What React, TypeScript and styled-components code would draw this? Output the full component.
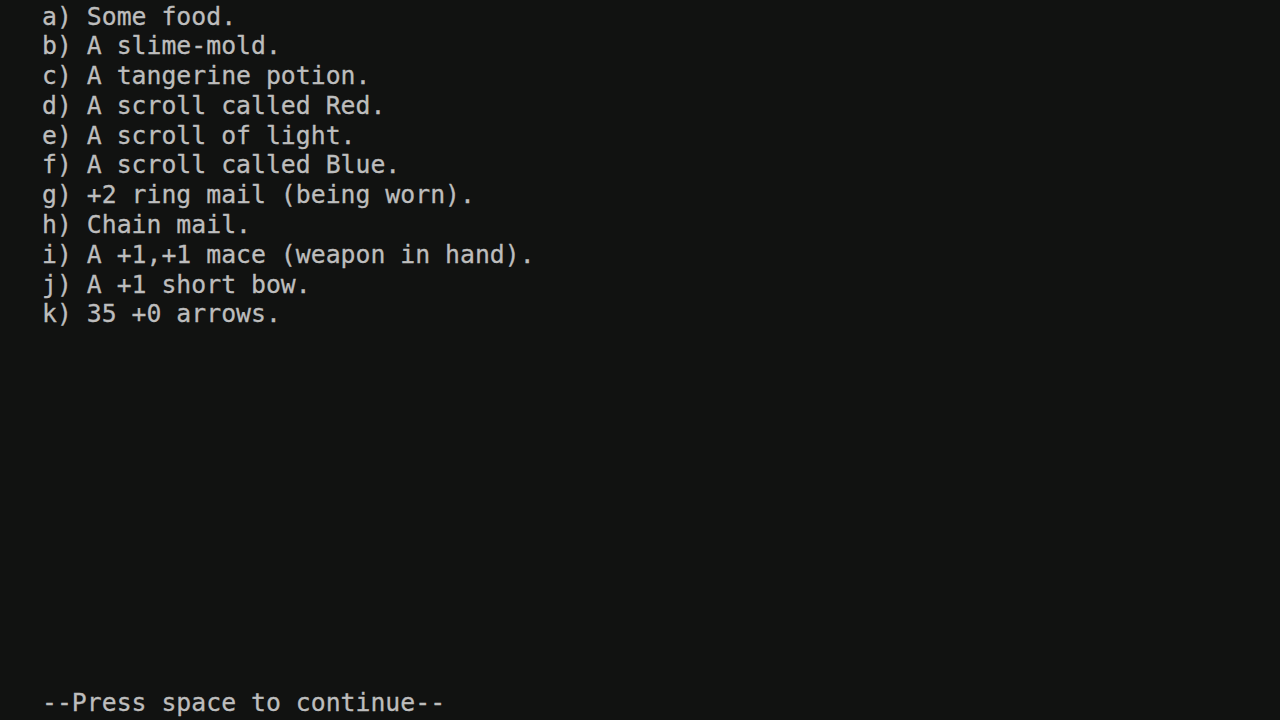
import React from "react";
import styled, { createGlobalStyle } from "styled-components";

const Global = createGlobalStyle`
  html, body { margin: 0; padding: 0; background: #111211; }
  body { overflow: hidden; }
`;

const Screen = styled.div`
  width: 1280px;
  height: 720px;
  box-sizing: border-box;
  background: #111211;
  color: #bdbdbd;
  font-family: "DejaVu Sans Mono", "Liberation Mono", monospace;
  font-size: 24.8px;
  line-height: 29.8px;
  padding: 1.5px 0 2px 42px;
  display: flex;
  flex-direction: column;
  white-space: pre;
  -webkit-text-stroke: 0.3px #bdbdbd;
`;

const List = styled.div`
  display: flex;
  flex-direction: column;
`;

const Line = styled.div`
  height: 29.8px;
`;

const Prompt = styled.div`
  margin-top: auto;
  height: 30px;
  line-height: 30px;
`;

const items: [string, string][] = [
  ["a", "Some food."],
  ["b", "A slime-mold."],
  ["c", "A tangerine potion."],
  ["d", "A scroll called Red."],
  ["e", "A scroll of light."],
  ["f", "A scroll called Blue."],
  ["g", "+2 ring mail (being worn)."],
  ["h", "Chain mail."],
  ["i", "A +1,+1 mace (weapon in hand)."],
  ["j", "A +1 short bow."],
  ["k", "35 +0 arrows."],
];

export default function App() {
  return (
    <>
      <Global />
      <Screen>
        <List>
          {items.map(([k, t]) => (
            <Line key={k}>{`${k}) ${t}`}</Line>
          ))}
        </List>
        <Prompt>--Press space to continue--</Prompt>
      </Screen>
    </>
  );
}
